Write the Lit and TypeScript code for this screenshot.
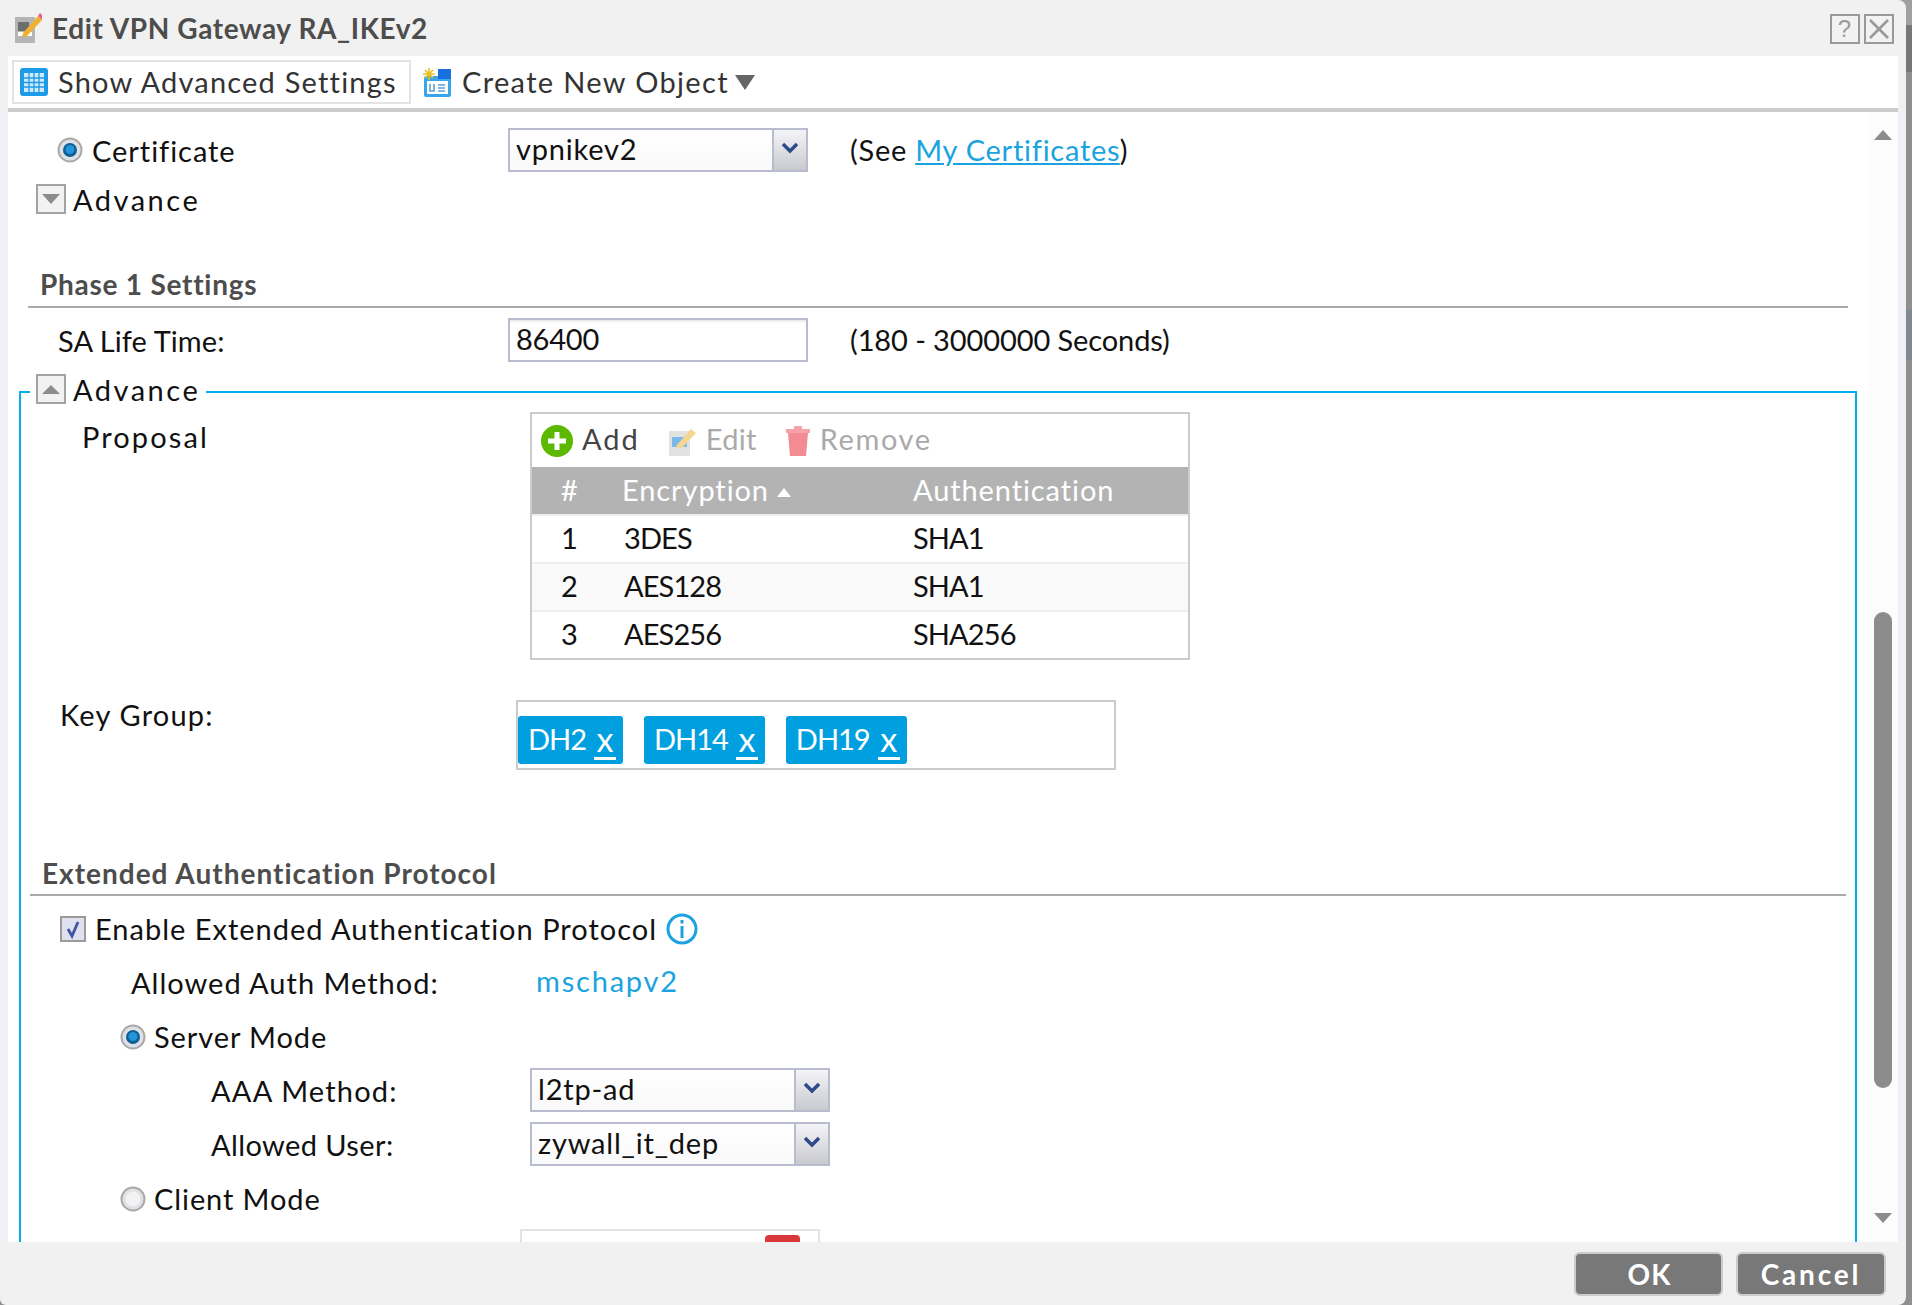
import { LitElement, html, css, svg } from "lit";
import { customElement } from "lit/decorators.js";

const radio = (on: boolean) => html`<svg class="radio" viewBox="0 0 26 26" width="26" height="26">
  <circle cx="13" cy="13" r="12.500" fill="#a9a9a9"/>
  <circle cx="13" cy="13" r="10.500" fill="#dfe1e6"/>
  ${on ? svg`<circle cx="13" cy="13" r="7" fill="#0e5f92"/><circle cx="13" cy="12.500" r="4.500" fill="#2196dc"/>` : svg`<circle cx="13" cy="13" r="7.500" fill="#f2f2f2"/>`}
</svg>`;

const toggle = (up: boolean) => html`<svg class="toggle" viewBox="0 0 30 30" width="30" height="30">
  <rect x="1" y="1" width="28" height="28" fill="#f2f2f2" stroke="#a3a3a3" stroke-width="2"/>
  <path d="${up ? "M6 20 L24 20 L15 11 Z" : "M6 10 L24 10 L15 20 Z"}" fill="#8c8c8c"/>
</svg>`;

const sel = (v: string) => html`<div class="select"><span class="sel-val">${v}</span><span class="sel-btn">
  <svg viewBox="0 0 16 12" width="16" height="12"><path d="M1 2 L8 9 L15 2" fill="none" stroke="#2f4a8a" stroke-width="3.400"/></svg></span></div>`;

const chip = (v: string) => html`<span class="chip"><span class="chip-t">${v}</span><span class="chip-x">x</span></span>`;

@customElement("app-root")
export class AppRoot extends LitElement {
  static styles = css`
    :host { display: block; width: 1912px; height: 1305px; overflow: hidden;
      background: linear-gradient(to bottom, #a0a0a0 0 25px, #777 25px 72px, #8f8f8f 72px 310px, #7e8a90 310px 360px, #8f8f8f 360px);
      font-family: "Lato", "Liberation Sans", sans-serif; font-size: 29px; letter-spacing: 1.2px; color: #111; }
    * { box-sizing: border-box; }
    .window { position: relative; width: 1906px; height: 1305px; background: #f1f1f1; display: flex; flex-direction: column;
      border-radius: 0 8px 8px 6px; overflow: hidden; }
    .title { height: 56px; display: flex; align-items: center; padding-left: 15px; gap: 10px; flex: none; }
    .title-text { font-size: 28px; font-weight: 700; color: #4d4d4d; letter-spacing: 0.6px; }
    .win-btns { margin-left: auto; margin-right: 12px; display: flex; gap: 4px; margin-top: 1px; }
    .toolbar { margin-left: 8px; width: 1890px; height: 56px; flex: none; background: #fff; border-bottom: 4px solid #ccc;
      display: flex; align-items: center; padding-left: 4px; }
    .tb-btn { display: flex; align-items: center; height: 44px; border: 2px solid #e3e3e3; padding-left: 6px; width: 399px; gap: 10px; color: #333; }
    .tb-btn2 { display: flex; align-items: center; margin-left: 12px; gap: 10px; color: #333; letter-spacing: 1.35px; }
    .tb-btn span, .tb-btn2 span:first-of-type { padding-bottom: 2px; }
    .tb-tri { width: 0; height: 0; border-left: 10px solid transparent; border-right: 10px solid transparent; border-top: 15px solid #666; margin-left: -4px; }
    .body { position: relative; width: 1906px; height: 1130px; flex: none; background: #fff; overflow: hidden;
      border-left: 8px solid #eff1f6; border-right: 8px solid #eff1f6; }
    .track { position: absolute; right: 0; top: 0; bottom: 0; width: 30px; background: #fcfcfc; }
    .up, .down { position: absolute; left: 6px; width: 0; height: 0; border-left: 9px solid transparent; border-right: 9px solid transparent; }
    .up { top: 18px; border-bottom: 10px solid #8c8c8c; }
    .down { top: 1101px; border-top: 10px solid #8c8c8c; }
    .thumb { position: absolute; left: 6px; top: 500px; width: 18px; height: 476px; border-radius: 9px; background: #8c8c8c; }
    .row { display: flex; align-items: center; position: relative; }
    .r-cert { margin-top: 16px; height: 44px; padding-left: 49px; }
    .lab-cert { margin-left: 9px; width: 416px; letter-spacing: 0.95px; }
    .r-adv { margin-top: 12px; height: 30px; padding-left: 28px; gap: 7px; }
    .adv { letter-spacing: 2.5px; }
    .hint { margin-left: 42px; padding-bottom: 2px; letter-spacing: 0.75px; }
    .hint-num { letter-spacing: -0.1px; }
    a { color: #1aa3e0; text-decoration: underline; }
    .section { font-size: 28px; font-weight: 700; color: #4d4d4d; height: 42px; border-bottom: 2px solid #aaa; padding: 0 0 4px 12px; display: flex; align-items: center; letter-spacing: 0.75px; }
    .s-phase { margin: 52px 0 0 20px; width: 1820px; }
    .s-ext { margin: 85px 0 0 9px; width: 1816px; height: 41px; letter-spacing: 1px; }
    .r-sa { margin-top: 10px; height: 44px; padding-left: 50px; }
    .lab-sa { width: 450px; padding-top: 1px; letter-spacing: 0.1px; }
    .input { width: 300px; height: 44px; border: 2px solid #b9bccf; background: #fff; padding: 0 0 4px 6px; display: flex; align-items: center; box-shadow: inset 0 3px 3px -2px #ddd; letter-spacing: -0.2px; }
    .select { width: 300px; height: 44px; border: 2px solid #b9bccf; display: flex; background: linear-gradient(#fff, #f9f9f9); flex: none; }
    .sel-val { flex: 1; padding: 0 0 4px 6px; display: flex; align-items: center; letter-spacing: 0.8px; }
    .sel-btn { width: 34px; border-left: 2px solid #b9bccf; background: linear-gradient(#f4f4f8, #c9cacf); display: flex; align-items: flex-start; justify-content: center; padding-top: 12px; }
    fieldset { margin: 12px 0 0 11px; padding: 0; width: 1838px; height: 900px; border: 2px solid #00aeef; min-width: 0; }
    legend { margin-left: 9px; padding: 0 6px 6px; height: 36px; display: flex; align-items: center; gap: 7px; }
    .r-prop { margin-top: 2px; align-items: flex-start; padding-left: 61px; }
    .lab-prop { width: 448px; padding-top: 7px; letter-spacing: 2.1px; }
    .grid { width: 660px; border: 2px solid #ccc; flex: none; }
    .g-tools { height: 53px; display: flex; align-items: center; padding-left: 9px; color: #444; }
    .g-tool { display: flex; align-items: center; gap: 9px; }
    .g-t { padding-bottom: 4px; }
    .g-add { letter-spacing: 2px; }
    .g-edit { margin-left: 29px; letter-spacing: 0.3px; }
    .g-rem { margin-left: 28px; letter-spacing: 1.6px; }
    .g-off { color: #aaa; }
    .g-row { display: grid; grid-template-columns: 92px 289px 1fr; height: 48px; align-items: center; border-top: 2px solid #eee; letter-spacing: -0.9px; padding-bottom: 4px; }
    .g-row > :first-child { text-align: center; padding-right: 17px; letter-spacing: 0; }
    .g-alt { background: #fafafa; }
    .g-head { height: 47px; background: #b3b3b3; color: #fff; border-top: 0; letter-spacing: 0.9px; padding-bottom: 3px; }
    .g-head span:nth-child(2) { margin-left: -2px; }
    .sort { display: inline-block; width: 0; height: 0; border-left: 7px solid transparent; border-right: 7px solid transparent; border-bottom: 9px solid #fff; margin-left: 8px; vertical-align: 4px; }
    .r-key { margin-top: 40px; align-items: flex-start; padding-left: 39px; }
    .lab-key { width: 456px; margin-top: -3px; }
    .keybox { width: 600px; height: 70px; border: 2px solid #ccc; padding: 14px 0 0 0; display: flex; gap: 21px; }
    .chip { height: 48px; background: #00a0e0; color: #fff; border-radius: 3px; display: flex; align-items: center; padding: 0 7px 0 10px; gap: 8px; letter-spacing: -1px; }
    .chip-t { padding-bottom: 3px; }
    .chip-x { border-bottom: 3px solid #fff; width: 22px; height: 34px; line-height: 26px; text-align: center; font-size: 34px; font-weight: 400; margin-top: 6px; letter-spacing: 0; }
    .r-en { margin-top: 20px; height: 26px; padding-left: 39px; gap: 9px; letter-spacing: 1px; }
    .r-en span { padding-bottom: 1px; }
    .r-auth { margin-top: 21px; height: 40px; padding-left: 110px; }
    .lab-auth { width: 405px; letter-spacing: 1px; padding-bottom: 1px; }
    .val { color: #1aa3e0; margin-top: -6px; letter-spacing: 1.8px; }
    .r-mode { margin-top: 19px; height: 30px; padding-left: 99px; gap: 8px; letter-spacing: 0.9px; }
    .r-client { margin-top: 18px; }
    .r-mode span { padding-bottom: 1px; }
    .r-sel { height: 44px; padding-left: 190px; }
    .lab-sel { width: 319px; padding-top: 1px; }
    .lab-user { letter-spacing: 0.4px; }
    .m15 { margin-top: 16px; }
    .m10 { margin-top: 10px; }
    .r-cut { margin-top: 15px; padding-left: 499px; }
    .cutbox { position: relative; width: 300px; height: 44px; border: 2px solid #e3e3e3; }
    .cutred { position: absolute; left: 243px; top: 4px; width: 35px; height: 24px; border-radius: 4px; background: #d9383a; }
    .footer { flex: 1; display: flex; justify-content: flex-end; align-items: flex-start; padding: 10px 20px 0 0; gap: 13px; }
    .btn { width: 150px; height: 44px; background: #787878; border: 2px solid #ccc; border-radius: 6px; color: #fff; font-weight: 700; display: flex; align-items: center; justify-content: center; font-size: 28px; }
    .btn-ok { width: 149px; padding-left: 2px; }
    .btn-cancel { letter-spacing: 2.8px; }
  `;

  render() {
    return html`<div class="window">
      <div class="title">
        <svg viewBox="0 0 27 30" width="27" height="30">
          <rect x="0" y="4" width="20" height="26" fill="#b5b5b5"/>
          <rect x="3" y="19" width="14" height="4" fill="#fff"/><rect x="3" y="9" width="11" height="9" fill="#6e6e6e"/>
          <path d="M8 20 L23 3 L27 7 L12 23 L7 24 Z" fill="#f0b030"/><path d="M23 3 L25 0 L27 2 L27 7 Z" fill="#e8607a"/>
        </svg>
        <span class="title-text">Edit VPN Gateway RA_IKEv2</span>
        <div class="win-btns">
          <svg viewBox="0 0 30 30" width="30" height="30"><rect x="1" y="1" width="28" height="28" fill="#f2f2f2" stroke="#999" stroke-width="2"/><text x="15" y="23" font-size="24" text-anchor="middle" fill="#999" font-family="Liberation Sans">?</text></svg>
          <svg viewBox="0 0 30 30" width="30" height="30"><rect x="1" y="1" width="28" height="28" fill="#f2f2f2" stroke="#999" stroke-width="2"/><path d="M6 6 L24 24 M24 6 L6 24" stroke="#999" stroke-width="2.600"/></svg>
        </div>
      </div>
      <div class="toolbar">
        <div class="tb-btn">
          <svg viewBox="0 0 28 28" width="28" height="28"><rect width="28" height="28" rx="3" fill="#1e9be8"/><rect x="4" y="5" width="20" height="19" fill="#cfeafa"/><path d="M4 10H24M4 14.500H24M4 19H24M9 5V24M14 5V24M19 5V24" stroke="#1e9be8" stroke-width="1.300"/></svg>
          <span>Show Advanced Settings</span>
        </div>
        <div class="tb-btn2">
          <svg viewBox="0 0 29 30" width="29" height="30"><rect x="1" y="9" width="27" height="21" rx="2" fill="#39a6ea"/><rect x="4" y="14" width="21" height="13" fill="#fff"/><rect x="15" y="2" width="13" height="10" fill="#1a6fe0"/><path d="M6 1V13M0 7H12M2 3L10 11M10 3L2 11" stroke="#e8c020" stroke-width="1.600"/><path d="M7 17V24H11V17M15 18H22M15 21H22M15 24H22" fill="none" stroke="#5b9fd8" stroke-width="1.600"/></svg>
          <span>Create New Object</span><span class="tb-tri"></span>
        </div>
      </div>
      <div class="body">
        <div class="row r-cert">${radio(true)}<span class="lab-cert">Certificate</span>${sel("vpnikev2")}<span class="hint">(See <a>My Certificates</a>)</span></div>
        <div class="row r-adv">${toggle(false)}<span class="adv">Advance</span></div>
        <div class="section s-phase">Phase 1 Settings</div>
        <div class="row r-sa"><span class="lab-sa">SA Life Time:</span><div class="input">86400</div><span class="hint hint-num">(180 - 3000000 Seconds)</span></div>
        <fieldset>
          <legend>${toggle(true)}<span class="adv">Advance</span></legend>
          <div class="row r-prop"><span class="lab-prop">Proposal</span>
            <div class="grid">
              <div class="g-tools">
                <span class="g-tool g-add"><svg viewBox="0 0 32 32" width="32" height="32"><circle cx="16" cy="16" r="16" fill="#5cb800"/><path d="M16 7V25M7 16H25" stroke="#fff" stroke-width="5"/></svg><span class="g-t">Add</span></span>
                <span class="g-tool g-off g-edit"><svg viewBox="0 0 28 30" width="28" height="30"><rect y="5" width="21" height="25" fill="#e2e2e2"/><rect x="3" y="11" width="15" height="10" fill="#7ab8ea"/><path d="M7 20L22 3L27 7L12 23Z" fill="#f6d590"/></svg><span class="g-t">Edit</span></span>
                <span class="g-tool g-off g-rem"><svg viewBox="0 0 26 30" width="26" height="30"><path d="M3 7H23L21 30H5Z" fill="#f28b92"/><rect x="1" y="3" width="24" height="4" fill="#f4a4a9"/><rect x="9" y="0" width="8" height="3" fill="#f4a4a9"/></svg><span class="g-t">Remove</span></span>
              </div>
              <div class="g-row g-head"><span>#</span><span>Encryption<i class="sort"></i></span><span>Authentication</span></div>
              <div class="g-row"><span>1</span><span>3DES</span><span>SHA1</span></div>
              <div class="g-row g-alt"><span>2</span><span>AES128</span><span>SHA1</span></div>
              <div class="g-row"><span>3</span><span>AES256</span><span>SHA256</span></div>
            </div>
          </div>
          <div class="row r-key"><span class="lab-key">Key Group:</span>
            <div class="keybox">${chip("DH2")}${chip("DH14")}${chip("DH19")}</div></div>
          <div class="section s-ext">Extended Authentication Protocol</div>
          <div class="row r-en">
            <svg viewBox="0 0 26 26" width="26" height="26"><rect x="1" y="1" width="24" height="24" fill="#dfe1ee" stroke="#9a9a9a" stroke-width="2"/><path d="M8 13L12 20L18 6" fill="none" stroke="#3f55a8" stroke-width="2.800"/></svg>
            <span>Enable Extended Authentication Protocol</span>
            <svg viewBox="0 0 32 32" width="32" height="32"><circle cx="16" cy="16" r="14" fill="#fff" stroke="#1aa3e0" stroke-width="3"/><rect x="14.500" y="13" width="3" height="12" fill="#1aa3e0"/><rect x="14.500" y="7" width="3" height="3.500" fill="#1aa3e0"/></svg>
          </div>
          <div class="row r-auth"><span class="lab-auth">Allowed Auth Method:</span><span class="val">mschapv2</span></div>
          <div class="row r-mode">${radio(true)}<span>Server Mode</span></div>
          <div class="row r-sel m15"><span class="lab-sel">AAA Method:</span>${sel("l2tp-ad")}</div>
          <div class="row r-sel m10"><span class="lab-sel lab-user">Allowed User:</span>${sel("zywall_it_dep")}</div>
          <div class="row r-mode r-client">${radio(false)}<span>Client Mode</span></div>
          <div class="row r-cut"><div class="cutbox"><span class="cutred"></span></div></div>
        </fieldset>
        <div class="track"><span class="up"></span><span class="thumb"></span><span class="down"></span></div>
      </div>
      <div class="footer"><span class="btn btn-ok">OK</span><span class="btn btn-cancel">Cancel</span></div>
    </div>`;
  }
}
